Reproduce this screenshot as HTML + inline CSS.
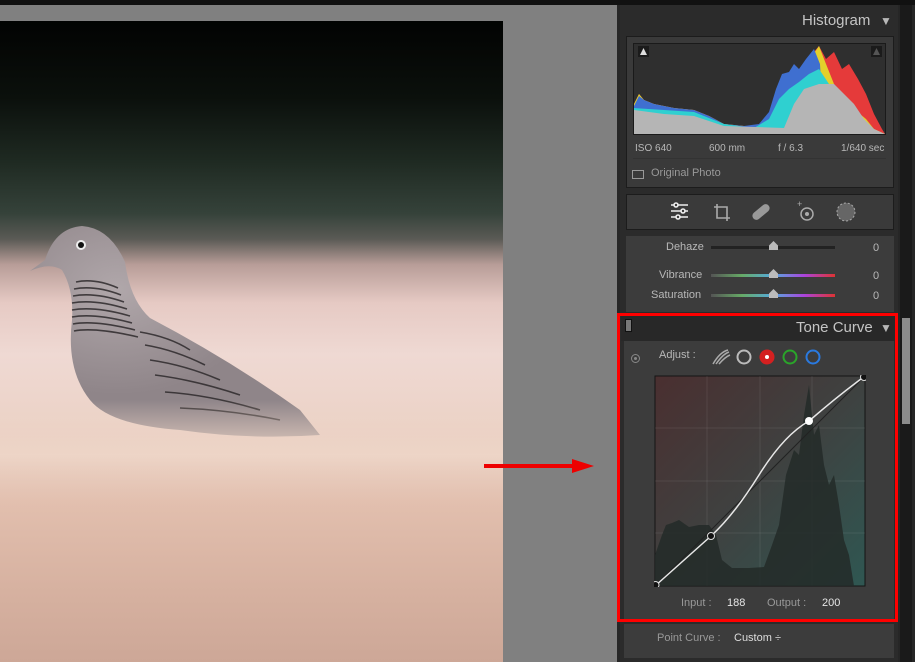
<!DOCTYPE html>
<html><head><meta charset="utf-8"><style>
*{margin:0;padding:0;box-sizing:border-box}
body{width:915px;height:662px;overflow:hidden;background:#808080;position:relative;font-family:"Liberation Sans",sans-serif;color:#bdbdbd}
.abs{position:absolute}
.t{font-size:11px;color:#b8b8b8;position:absolute;white-space:nowrap}
</style></head><body>
<div class="abs" style="left:0;top:0;width:915px;height:5px;background:#111"></div>
<!-- photo -->
<div class="abs" style="left:0;top:21px;width:503px;height:641px;overflow:hidden;background:linear-gradient(180deg,#020302 0%,#0b100c 12%,#1f2a22 22%,#35423a 30%,#5a5a55 34%,#b89d98 38%,#e6cac4 44%,#efd9d3 52%,#ecd3c8 62%,#e2bfae 75%,#d7b2a1 88%,#cda797 100%)">
<svg width="503" height="641" viewBox="0 21 503 641" style="position:absolute;left:0;top:0">
<defs><radialGradient id="g1" cx="0.3" cy="0.3"><stop offset="0" stop-color="#b0a7aa"/><stop offset="1" stop-color="#8f8589"/></radialGradient>
<linearGradient id="fog" x1="0" y1="0" x2="0" y2="1"><stop offset="0" stop-color="#ecd4c6" stop-opacity="0"/><stop offset="0.5" stop-color="#eed6c8" stop-opacity="0.9"/><stop offset="1" stop-color="#e3c2b2" stop-opacity="0"/></linearGradient></defs>
<path d="M30 271 L45 260 Q55 228 82 226 Q110 228 125 262 Q130 300 150 318 Q230 360 300 410 L320 435 Q250 440 180 430 Q110 425 90 400 Q66 370 72 320 Q74 290 62 270 Q50 262 30 271Z" fill="url(#g1)"/>
<g stroke="#2e2a2c" stroke-width="1.6" fill="none" opacity="0.85">
<path d="M76 282 Q95 278 118 288"/><path d="M74 289 Q95 285 121 295"/><path d="M73 296 Q95 292 124 302"/><path d="M72 303 Q95 299 127 309"/><path d="M72 310 Q95 306 130 316"/><path d="M72 317 Q95 313 132 323"/><path d="M73 324 Q95 320 135 330"/><path d="M74 331 Q95 327 138 337"/>
<path d="M140 332 Q170 337 190 350"/><path d="M145 345 Q175 350 205 365"/><path d="M150 360 Q185 365 220 380"/><path d="M155 375 Q195 380 240 395"/><path d="M165 392 Q210 395 260 410"/><path d="M180 408 Q230 410 280 420"/>
</g>
<circle cx="81" cy="245" r="5" fill="#eee"/><circle cx="81" cy="245" r="3" fill="#111"/>
<rect x="0" y="400" width="503" height="110" fill="url(#fog)"/>
</svg></div>
<!-- arrow -->
<div class="abs" style="left:484px;top:464px;width:90px;height:4px;background:#e00"></div>
<div class="abs" style="left:572px;top:459px;width:0;height:0;border-left:22px solid #e00;border-top:7px solid transparent;border-bottom:7px solid transparent"></div>
<!-- panel -->
<div class="abs" style="left:617px;top:5px;width:298px;height:657px;background:#262626"></div>
<div class="abs" style="left:620px;top:5px;width:278px;height:657px;background:#2b2b2b"></div>
<div class="abs" style="left:900px;top:5px;width:12px;height:657px;background:#1a1a1a"></div>
<div class="abs" style="left:902px;top:318px;width:8px;height:106px;background:#8c8c8c"></div>
<div class="t" style="left:802px;top:12px;font-size:15px;color:#c4c4c4">Histogram</div>
<div class="t" style="left:880px;top:14px;font-size:12px">▼</div>
<div class="abs" style="left:626px;top:36px;width:268px;height:152px;background:#3a3a3a;border:1px solid #1c1c1c"></div>
<div class="abs" style="left:633px;top:43px;width:253px;height:92px;background:#2f2f2f;border:1px solid #1a1a1a"></div>
<svg class="abs" style="left:634px;top:44px" width="251" height="90" viewBox="0 0 251 90">
<polygon points="0,90 0,60 5,50 10,56 20,60 40,64 60,66 75,72 90,80 110,82 125,82 135,72 145,55 155,45 165,35 172,20 178,10 185,2 192,15 200,8 208,25 215,20 224,35 232,50 240,70 248,85 251,90" fill="#e53a3a"/>
<polygon points="0,90 0,60 5,50 10,56 20,60 40,64 60,66 75,72 90,80 110,82 125,82 135,72 145,55 155,45 165,35 172,20 178,12 185,2 192,20 200,40 210,55 220,65 232,75 240,85 251,90" fill="#e3d02b"/>
<polygon points="0,90 0,62 5,52 10,56 20,60 40,64 60,66 75,72 90,80 110,82 125,80 135,68 142,45 148,30 155,28 160,20 165,25 172,15 180,5 186,20 190,90" fill="#3f6fd0"/>
<polygon points="0,90 0,64 30,66 60,68 90,80 120,84 135,75 145,55 155,45 165,38 175,30 185,25 195,40 200,90" fill="#2fd0d0"/>
<polygon points="0,90 0,66 30,70 60,72 90,82 150,84 160,60 170,45 185,40 200,40 210,50 220,60 230,75 240,85 251,90" fill="#b5b5b5"/>
<rect x="4" y="2" width="11" height="11" fill="#1b1b1b"/><polygon points="6,11 9.5,4 13,11" fill="#ddd"/>
<rect x="237" y="2" width="11" height="11" fill="#1b1b1b"/><polygon points="239,11 242.5,4 246,11" fill="#555"/>
</svg>
<div class="t" style="left:635px;top:143px;font-size:10px">ISO 640</div>
<div class="t" style="left:709px;top:143px;font-size:10px">600 mm</div>
<div class="t" style="left:778px;top:143px;font-size:10px">f / 6.3</div>
<div class="t" style="left:841px;top:143px;font-size:10px">1/640 sec</div>
<div class="abs" style="left:633px;top:158px;width:253px;height:1px;background:#333"></div>
<div class="abs" style="left:632px;top:170px;width:12px;height:9px;border:1px solid #999"></div>
<div class="t" style="left:651px;top:167px;font-size:11px;color:#999">Original Photo</div>
<!-- tools -->
<div class="abs" style="left:626px;top:194px;width:268px;height:36px;background:#3a3a3a;border:1px solid #1c1c1c"></div>
<svg class="abs" style="left:660px;top:198px" width="200" height="28">
<g stroke="#eee" stroke-width="1.6" fill="none"><line x1="11" y1="7" x2="28" y2="7"/><line x1="11" y1="13" x2="28" y2="13"/><line x1="11" y1="19" x2="28" y2="19"/><circle cx="16" cy="7" r="2" fill="#3a3a3a"/><circle cx="23" cy="13" r="2" fill="#3a3a3a"/><circle cx="18" cy="19" r="2" fill="#3a3a3a"/></g>
<g stroke="#aaa" stroke-width="1.6" fill="none"><path d="M57 6 V20 H70 M54 9 H67 V23"/></g>
<g transform="rotate(-40 101 14)"><rect x="91" y="10" width="20" height="8" rx="4" fill="#999"/></g>
<circle cx="147" cy="16" r="6" stroke="#aaa" stroke-width="1.5" fill="none"/><circle cx="147" cy="16" r="2" fill="#aaa"/><text x="137" y="9" fill="#aaa" font-size="9">+</text>
<circle cx="186" cy="14" r="9" fill="#666" stroke="#aaa" stroke-dasharray="2 2"/>
</svg>
<!-- sliders -->
<div class="abs" style="left:626px;top:236px;width:268px;height:76px;background:#3c3c3c"></div>
<div class="t" style="left:666px;top:241px">Dehaze</div>
<div class="t" style="left:659px;top:269px">Vibrance</div>
<div class="t" style="left:651px;top:289px">Saturation</div>
<div class="t" style="left:873px;top:242px">0</div><div class="t" style="left:873px;top:270px">0</div><div class="t" style="left:873px;top:290px">0</div>
<div class="abs" style="left:711px;top:246px;width:124px;height:3px;background:#222"></div>
<div class="abs" style="left:711px;top:274px;width:124px;height:3px;background:linear-gradient(90deg,#555,#6a6,#5ad,#a4d,#d33)"></div>
<div class="abs" style="left:711px;top:294px;width:124px;height:3px;background:linear-gradient(90deg,#555,#6a6,#5ad,#a4d,#d33)"></div>
<div class="abs" style="left:769px;top:241px;width:9px;height:9px;background:#bbb;clip-path:polygon(50% 0,100% 50%,100% 100%,0 100%,0 50%)"></div>
<div class="abs" style="left:769px;top:269px;width:9px;height:9px;background:#bbb;clip-path:polygon(50% 0,100% 50%,100% 100%,0 100%,0 50%)"></div>
<div class="abs" style="left:769px;top:289px;width:9px;height:9px;background:#bbb;clip-path:polygon(50% 0,100% 50%,100% 100%,0 100%,0 50%)"></div>
<!-- tone curve -->
<div class="abs" style="left:621px;top:315px;width:274px;height:26px;background:#282828"></div>
<div class="abs" style="left:625px;top:319px;width:7px;height:13px;background:#777;border:1px solid #111"></div>
<div class="t" style="left:796px;top:319px;font-size:15px;color:#c4c4c4">Tone Curve</div>
<div class="t" style="left:880px;top:321px;font-size:12px">▼</div>
<div class="abs" style="left:624px;top:341px;width:270px;height:280px;background:#3c3c3c"></div>
<div class="abs" style="left:631px;top:354px;width:9px;height:9px;border:1px solid #888;border-radius:50%"></div>
<div class="abs" style="left:634px;top:357px;width:3px;height:3px;background:#888;border-radius:50%"></div>
<div class="t" style="left:659px;top:349px;font-size:11px">Adjust :</div>
<svg class="abs" style="left:710px;top:347px" width="115" height="20">
<path d="M3 17 Q10 5 18 3 M6 17 Q13 7 19 5 M9 17 Q15 10 20 8" stroke="#aaa" stroke-width="1.5" fill="none"/>
<circle cx="34" cy="10" r="6.5" stroke="#bbb" stroke-width="2" fill="none"/>
<circle cx="57" cy="10" r="7.5" fill="#d42020"/><circle cx="57" cy="10" r="2" fill="#fff"/>
<circle cx="80" cy="10" r="6.5" stroke="#2aa52a" stroke-width="2" fill="none"/>
<circle cx="103" cy="10" r="6.5" stroke="#2a7ae0" stroke-width="2" fill="none"/>
</svg>
<svg class="abs" style="left:654px;top:375px" width="212" height="212" viewBox="0 0 212 212">
<defs><linearGradient id="bg" x1="0" y1="0" x2="1" y2="1"><stop offset="0" stop-color="#4a2f30"/><stop offset="0.5" stop-color="#3f4140"/><stop offset="1" stop-color="#2f5752"/></linearGradient></defs>
<rect x="1" y="1" width="210" height="210" fill="url(#bg)" stroke="#151515"/>
<g stroke="#ffffff" stroke-opacity="0.08"><line x1="53" y1="1" x2="53" y2="211"/><line x1="106" y1="1" x2="106" y2="211"/><line x1="158" y1="1" x2="158" y2="211"/><line x1="1" y1="53" x2="211" y2="53"/><line x1="1" y1="106" x2="211" y2="106"/><line x1="1" y1="158" x2="211" y2="158"/></g>
<polygon points="1,211 1,180 8,160 12,150 18,148 25,145 35,152 45,150 55,150 62,160 68,185 78,193 95,193 110,192 118,170 125,150 132,100 140,75 145,80 150,40 155,10 160,60 165,50 170,90 175,110 180,100 185,130 190,165 195,180 200,211" fill="#232a28" opacity="0.85"/>
<line x1="1" y1="211" x2="211" y2="1" stroke="#222" stroke-width="1"/>
<path d="M1 211 Q30 185 57 161 Q80 140 105 100 Q130 60 155 46 Q185 20 211 1" stroke="#e8e8e8" stroke-width="1.5" fill="none"/>
<circle cx="1.5" cy="210" r="3.5" fill="#111" stroke="#ddd"/>
<circle cx="57" cy="161" r="3.5" fill="#111" stroke="#ddd"/>
<circle cx="155" cy="46" r="4" fill="#fff"/>
<circle cx="210" cy="2" r="3.5" fill="#111" stroke="#ddd"/>
</svg>
<div class="t" style="left:681px;top:597px;font-size:11px;color:#999">Input :</div>
<div class="t" style="left:727px;top:597px;font-size:11px;color:#e6e6e6">188</div>
<div class="t" style="left:767px;top:597px;font-size:11px;color:#999">Output :</div>
<div class="t" style="left:822px;top:597px;font-size:11px;color:#e6e6e6">200</div>
<div class="abs" style="left:617px;top:313px;width:281px;height:309px;border:3px solid #f00"></div>
<div class="abs" style="left:624px;top:624px;width:270px;height:34px;background:#3c3c3c"></div>
<div class="t" style="left:657px;top:632px;font-size:11px;color:#999">Point Curve :</div>
<div class="t" style="left:734px;top:632px;font-size:11px;color:#ddd">Custom ÷</div>
</body></html>
